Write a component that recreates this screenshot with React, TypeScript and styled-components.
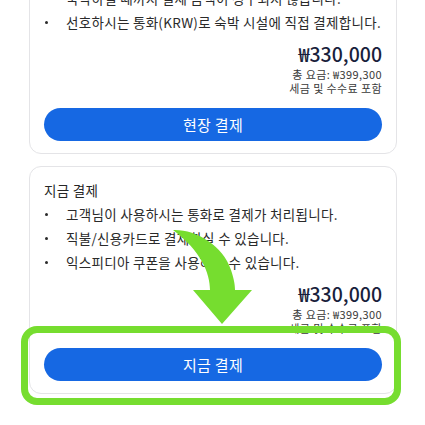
import styled, { createGlobalStyle } from "styled-components";

const GlobalStyle = createGlobalStyle`
  body {
    margin: 0;
    background: #ffffff;
    font-family: "Noto Sans CJK KR", "Noto Sans", sans-serif;
    color: #232323;
  }
`;

interface PayOption {
  title: string;
  notes: string[];
  price: string;
  total: string;
  action: string;
}

const options: PayOption[] = [
  {
    title: "현장 결제",
    notes: [
      "지금 결제하실 필요가 없습니다.",
      "숙박하실 때까지 결제 금액이 청구되지 않습니다.",
      "선호하시는 통화(KRW)로 숙박 시설에 직접 결제합니다.",
    ],
    price: "₩330,000",
    total: "총 요금: ₩399,300",
    action: "현장 결제",
  },
  {
    title: "지금 결제",
    notes: [
      "고객님이 사용하시는 통화로 결제가 처리됩니다.",
      "직불/신용카드로 결제하실 수 있습니다.",
      "익스피디아 쿠폰을 사용하실 수 있습니다.",
    ],
    price: "₩330,000",
    total: "총 요금: ₩399,300",
    action: "지금 결제",
  },
];

export default function App() {
  return (
    <>
      <GlobalStyle />
      <Viewport>
        <Page>
          {options.map((opt) => (
            <Card key={opt.title}>
              <Title>{opt.title}</Title>
              <Notes>
                {opt.notes.map((n) => (
                  <Note key={n}>{n}</Note>
                ))}
              </Notes>
              <PriceBlock>
                <Price>{opt.price}</Price>
                <SmallLine>{opt.total}</SmallLine>
                <SmallLine>세금 및 수수료 포함</SmallLine>
              </PriceBlock>
              <PayButton>{opt.action}</PayButton>
            </Card>
          ))}
        </Page>

        {/* annotation overlays */}
        <Arrow width="95" height="105" viewBox="0 0 95 105">
          <path
            d="M8 5 C30 4, 58 20, 66 45 C69 54, 70 60, 70 65 L87 65 L57 99 L28 65 L45 65 C45 48, 36 26, 8 5 Z"
            fill="#76dd2f"
          />
        </Arrow>
        <Highlight />
      </Viewport>
    </>
  );
}

const Viewport = styled.div`
  position: relative;
  width: 425px;
  height: 425px;
  overflow: hidden;
`;

const Page = styled.div`
  display: flex;
  flex-direction: column;
  gap: 12px;
  margin-top: -74px;
  padding-left: 29px;
`;

const Card = styled.section`
  box-sizing: border-box;
  width: 368px;
  border: 1px solid #e4e4e7;
  border-radius: 12px;
  padding: 11px 14px 12px;
  display: flex;
  flex-direction: column;
`;

const Title = styled.div`
  font-size: 13.5px;
  letter-spacing: 0.3px;
  line-height: 24px;
  color: #262626;
`;

const Notes = styled.ul`
  list-style: none;
  margin: 0;
  padding: 0;
`;

const Note = styled.li`
  position: relative;
  padding-left: 22px;
  font-size: 13.5px;
  letter-spacing: 0.3px;
  line-height: 24px;
  color: #2a2a2a;
  white-space: nowrap;

  &::before {
    content: "";
    position: absolute;
    left: 1px;
    top: 11px;
    width: 3px;
    height: 3px;
    border-radius: 50%;
    background: #2a2a2a;
  }
`;

const PriceBlock = styled.div`
  display: flex;
  flex-direction: column;
  align-items: flex-end;
  margin-top: 7px;
`;

const Price = styled.div`
  font-size: 19.5px;
  font-weight: 500;
  line-height: 26px;
  color: #191e3b;
`;

const SmallLine = styled.div`
  font-size: 11px;
  letter-spacing: 0.4px;
  line-height: 14px;
  color: #3a3a3a;
`;

const PayButton = styled.button`
  margin-top: 13px;
  height: 33px;
  border: none;
  border-radius: 17px;
  background: #1668e3;
  color: #ffffff;
  font-family: inherit;
  font-size: 15px;
  letter-spacing: 0.3px;
  cursor: pointer;
`;

const Arrow = styled.svg`
  position: absolute;
  left: 165px;
  top: 225px;
`;

const Highlight = styled.div`
  position: absolute;
  left: 21px;
  top: 326px;
  width: 380px;
  height: 79px;
  box-sizing: border-box;
  border: 7px solid #76dd2f;
  border-radius: 16px;
  pointer-events: none;
`;
